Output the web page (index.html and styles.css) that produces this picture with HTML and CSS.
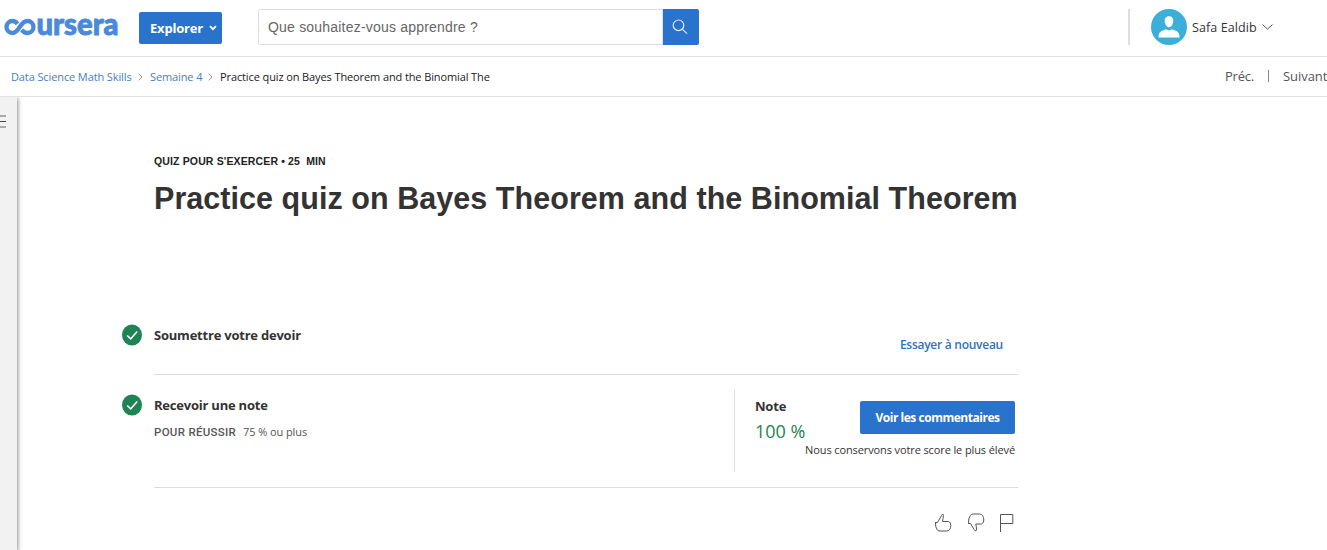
FILE: index.html
```html
<!DOCTYPE html>
<html lang="fr">
<head>
<meta charset="utf-8">
<title>Practice quiz on Bayes Theorem and the Binomial Theorem</title>
<link rel="stylesheet" href="styles.css">
</head>
<body>
<header class="topbar">
  <svg class="logo" width="116" height="24" viewBox="0 0 116 24">
    <path class="logo-mark" d="M13.500 8.800C11.800 6.600 10.200 6 8.500 6A6 6 0 0 0 8.500 18C15.800 18 15.500 6 23.500 6A6 6 0 0 1 23.500 18C21.400 18 19.500 17.100 17.700 14.800"/>
    <text class="logo-text" x="32.500" y="19.800" textLength="82" lengthAdjust="spacingAndGlyphs">ursera</text>
  </svg>
  <button class="explore"><span class="explore-label">Explorer</span>
    <svg width="8" height="6" viewBox="0 0 8 6"><path d="M1 1.2 4 4.2 7 1.2" fill="none" stroke="#fff" stroke-width="1.8"/></svg>
  </button>
  <div class="search">
    <div class="search-field"><span class="search-hint">Que souhaitez-vous apprendre ?</span></div>
    <div class="search-button">
      <svg width="16" height="16" viewBox="0 0 16 16"><g fill="none" stroke="#dfeaf8" stroke-width="1.2"><circle cx="6.5" cy="6.3" r="5.3"/><path d="M10.3 10.1 15 14.6"/></g></svg>
    </div>
  </div>
  <div class="account">
    <svg width="36" height="36" viewBox="0 0 36 36"><circle cx="18" cy="18" r="18" fill="#3bafda"/><path d="M18 7.300c3 0 4.500 2.200 4.200 5.200-.3 3.300-2 5.800-4.200 5.800s-3.900-2.500-4.200-5.800C13.500 9.500 15 7.300 18 7.300zM7.500 28.500c0-3.500.8-5.500 3.200-6.500l4.300-1.700c2 1.500 4 1.500 6 0l4.300 1.700c2.400 1 3.200 3 3.200 6.500z" fill="#fff"/></svg>
    <span class="account-name">Safa Ealdib</span>
    <svg width="11" height="6" viewBox="0 0 11 6"><path d="M.5.600 5.500 5 10.500.600" fill="none" stroke="#555"/></svg>
  </div>
</header>
<nav class="crumbs">
  <a class="crumb crumb-course">Data Science Math Skills</a>
  <svg class="sep" width="5" height="8" viewBox="0 0 5 8"><path d="M.7.700 4 4 .7 7.300" fill="none" stroke="#999"/></svg>
  <a class="crumb crumb-week">Semaine 4</a>
  <svg class="sep" width="5" height="8" viewBox="0 0 5 8"><path d="M.7.700 4 4 .7 7.300" fill="none" stroke="#999"/></svg>
  <span class="crumb-current">Practice quiz on Bayes Theorem and the Binomial The</span>
  <div class="pager"><span class="prev">Préc.</span><i class="pager-rule"></i><span class="next">Suivant</span></div>
</nav>
<div class="page">
  <aside class="rail"><i class="bar"></i><i class="bar bar-dark"></i><i class="bar"></i></aside>
  <main class="content">
    <div class="kicker">QUIZ POUR S'EXERCER • 25&nbsp; MIN</div>
    <h1 class="title">Practice quiz on Bayes Theorem and the Binomial Theorem</h1>
    <section class="row row-submit">
      <svg class="check" width="21" height="22" viewBox="0 0 21 22"><ellipse cx="10" cy="11" rx="10" ry="10.500" fill="#1f8354"/><path d="M5.200 11.500 8.700 14.800 15.200 7.500" fill="none" stroke="#fff" stroke-width="1.500"/></svg>
      <h2 class="row-title submit-title">Soumettre votre devoir</h2>
      <a class="retry">Essayer à nouveau</a>
    </section>
    <section class="row row-grade">
      <svg class="check" width="21" height="22" viewBox="0 0 21 22"><ellipse cx="10" cy="11" rx="10" ry="10.500" fill="#1f8354"/><path d="M5.200 11.500 8.700 14.800 15.200 7.500" fill="none" stroke="#fff" stroke-width="1.500"/></svg>
      <div class="requirement">
        <h2 class="row-title receive-title">Recevoir une note</h2>
        <div class="pass"><span class="pass-label">POUR RÉUSSIR</span><span class="pass-value">75 % ou plus</span></div>
      </div>
      <div class="grade">
        <div class="score"><div class="score-label">Note</div><div class="score-value">100 %</div></div>
        <div class="feedback">
          <button class="feedback-button"><span class="feedback-label">Voir les commentaires</span></button>
          <div class="note">Nous conservons votre score le plus élevé</div>
        </div>
      </div>
    </section>
    <div class="reactions">
      <svg width="18" height="19" viewBox="0 0 18 19"><path d="M1 9.500H3.500L7.500 2.500Q8 .700 9.200 1.500 9.700 2.200 9 5.500L8.500 8.500H14.500Q17 9 16.800 12.500 16.700 17.800 12.500 18H6Q3.500 18 3.300 16.800 1.200 14.500 1.500 9.500" class="glyph"/></svg>
      <svg width="18" height="19" viewBox="0 0 18 19"><path d="M1.200 10.500H3.500L7.200 16.500Q8 18.500 9.300 17.500 9.800 16.500 9.300 14L8.800 11H14.500Q17 10 16.800 7 16.500 1.200 12.500 1H6Q4 1 3.300 2.500 1.200 5 1.500 10.500" class="glyph"/></svg>
      <svg width="14" height="19" viewBox="0 0 14 19"><path d="M.5 19V1.500H12.800V10.500H.5" class="glyph"/></svg>
    </div>
  </main>
</div>
</body>
</html>
```
FILE: styles.css
```css
* { box-sizing: border-box; }
body { margin: 0; height: 550px; overflow: hidden; background: #fff; color: #333; font-family: "Open Sans", sans-serif; }
svg { display: block; flex: none; }
h1, h2 { margin: 0; }
button { border: 0; padding: 0; font-family: inherit; }
span, a, h1, h2, .note, .kicker { white-space: nowrap; }

.topbar { display: flex; height: 57px; padding-top: 9px; border-bottom: 1px solid #e1e1e1; }
.logo { margin: 6px 0 0 4px; overflow: visible; }
.logo-mark { fill: none; stroke: #4a89dc; stroke-width: 4.400; }
.logo-text { font: 900 29.500px Lato, sans-serif; fill: #4a89dc; stroke: #4a89dc; stroke-width: .9; }
.explore { display: flex; align-items: center; width: 83px; height: 32px; margin: 3px 0 0 19px; padding: 0 0 1px 11px; gap: 6px; border-radius: 2px; background: #2a73cc; color: #fff; }
.explore-label { font-size: 13px; font-weight: 700; width: 53px; letter-spacing: -.2px; }
.search { display: flex; margin-left: 36px; height: 36px; }
.search-field { width: 405px; padding-left: 9px; border: 1px solid #dedede; border-radius: 2px 0 0 2px; font: 14px/34px "Liberation Sans", sans-serif; letter-spacing: .2px; color: #666; }
.search-button { display: flex; align-items: center; justify-content: center; width: 36px; padding-right: 3px; background: #2a73cc; border-radius: 0 2px 2px 0; }
.account { display: flex; align-items: center; height: 36px; margin-left: 429px; padding-left: 21px; border-left: 2px solid #dedede; }
.account-name { width: 65px; margin: 0 5px 0 5px; font-size: 12.500px; letter-spacing: .1px; }

.crumbs { display: flex; align-items: center; height: 40px; padding-left: 11px; border-bottom: 1px solid #e1e1e1; font-size: 11px; letter-spacing: -.11px; color: #222; }
.crumb { color: #4081ca; }
.crumb-course { width: 121px; }
.crumb-week { width: 52px; }
.sep { margin: 1px 6px 0; }
.sep + .crumb-week { margin-left: 1px; }
.crumb-current { margin-left: 1px; }
.pager { display: flex; align-items: center; margin: -1px 0 0 auto; font-size: 13px; letter-spacing: -.2px; color: #555; }
.pager-rule { width: 1px; height: 12px; margin: 0 14px 0 15px; background: #888; }
.prev { width: 28px; }
.next { width: 44px; letter-spacing: -.05px; }

.page { display: flex; height: 453px; overflow: hidden; }
.rail { display: flex; flex-direction: column; gap: 4px; width: 17px; padding-top: 18px; background: #f2f2f2; box-shadow: 1px 1px 4px rgba(0,0,0,.45); }
.bar { width: 6px; height: 2px; background: #aaa; }
.bar-dark { height: 1px; background: #444; }
.content { width: 896px; margin-left: 105px; }
.kicker { margin: 58px 0 0 32px; font: 700 10.500px/13px "Liberation Sans", sans-serif; letter-spacing: .14px; color: #222; }
.title { margin: 10px 0 0 32px; font: 700 30.500px/40px "Liberation Sans", sans-serif; letter-spacing: .05px; }
.row { display: flex; background: linear-gradient(#dedede, #dedede) 32px 100% / 864px 1px no-repeat; }
.row-title { font-size: 13px; line-height: 20px; font-weight: 700; letter-spacing: -.22px; }
.row-submit { height: 51px; margin-top: 106px; }
.check { margin-right: 11px; }
.row-submit .row-title { margin-top: 1px; }
.retry { margin: 13px 0 0 auto; padding-right: 15px; font-size: 12px; line-height: 16px; font-weight: 600; letter-spacing: -.26px; color: #2a73cc; }
.row-grade { height: 113px; padding-top: 19px; }
.requirement { width: 580px; padding-top: 1px; }
.pass { display: flex; gap: 7px; margin-top: 9px; font-size: 11px; line-height: 16px; color: #555; }
.pass-label { font-family: Roboto, sans-serif; font-weight: 500; width: 82px; font-size: 11.500px; line-height: 17px; letter-spacing: .3px; }
.pass-value { letter-spacing: -.08px; }
.grade { display: flex; width: 284px; height: 81px; margin-top: -4px; border-left: 1px solid #dedede; padding: 6px 3px 0 20px; }
.score { width: 50px; }
.score-label { font-size: 13px; font-weight: 700; line-height: 20px; letter-spacing: -.2px; }
.score-value { margin-top: 3px; font-size: 18px; line-height: 24px; color: #1f8354; white-space: nowrap; }
.feedback { display: flex; flex-direction: column; align-items: flex-end; width: 210px; padding-top: 5px; }
.feedback-button { width: 155px; height: 33px; flex: none; padding-bottom: 1px; background: #2a73cc; border-radius: 2px; color: #fff; font-size: 12px; font-weight: 700; letter-spacing: -.47px; }
.note { margin-top: 8px; font-size: 11px; line-height: 16px; letter-spacing: -.11px; }
.reactions { display: flex; justify-content: flex-end; gap: 15px; margin-top: 25px; padding-right: 4px; }
.glyph { fill: none; stroke: #555; stroke-width: 1; }
```
